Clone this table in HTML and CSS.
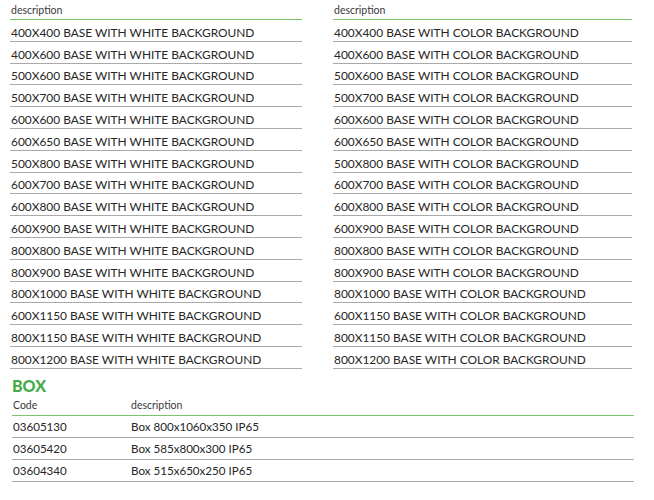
FILE: index.html
```html
<!DOCTYPE html>
<html>
<head>
<meta charset="utf-8">
<link rel="stylesheet" href="styles.css">
</head>
<body>
<div class="page">
  <div class="bases">
    <table class="list list-left">
      <thead><tr><th>description</th></tr></thead>
      <tbody>
        <tr><td>400X400 BASE WITH WHITE BACKGROUND</td></tr>
        <tr><td>400X600 BASE WITH WHITE BACKGROUND</td></tr>
        <tr><td>500X600 BASE WITH WHITE BACKGROUND</td></tr>
        <tr><td>500X700 BASE WITH WHITE BACKGROUND</td></tr>
        <tr><td>600X600 BASE WITH WHITE BACKGROUND</td></tr>
        <tr><td>600X650 BASE WITH WHITE BACKGROUND</td></tr>
        <tr><td>500X800 BASE WITH WHITE BACKGROUND</td></tr>
        <tr><td>600X700 BASE WITH WHITE BACKGROUND</td></tr>
        <tr><td>600X800 BASE WITH WHITE BACKGROUND</td></tr>
        <tr><td>600X900 BASE WITH WHITE BACKGROUND</td></tr>
        <tr><td>800X800 BASE WITH WHITE BACKGROUND</td></tr>
        <tr><td>800X900 BASE WITH WHITE BACKGROUND</td></tr>
        <tr><td>800X1000 BASE WITH WHITE BACKGROUND</td></tr>
        <tr><td>600X1150 BASE WITH WHITE BACKGROUND</td></tr>
        <tr><td>800X1150 BASE WITH WHITE BACKGROUND</td></tr>
        <tr><td>800X1200 BASE WITH WHITE BACKGROUND</td></tr>
      </tbody>
    </table>
    <table class="list list-right">
      <thead><tr><th>description</th></tr></thead>
      <tbody>
        <tr><td>400X400 BASE WITH COLOR BACKGROUND</td></tr>
        <tr><td>400X600 BASE WITH COLOR BACKGROUND</td></tr>
        <tr><td>500X600 BASE WITH COLOR BACKGROUND</td></tr>
        <tr><td>500X700 BASE WITH COLOR BACKGROUND</td></tr>
        <tr><td>600X600 BASE WITH COLOR BACKGROUND</td></tr>
        <tr><td>600X650 BASE WITH COLOR BACKGROUND</td></tr>
        <tr><td>500X800 BASE WITH COLOR BACKGROUND</td></tr>
        <tr><td>600X700 BASE WITH COLOR BACKGROUND</td></tr>
        <tr><td>600X800 BASE WITH COLOR BACKGROUND</td></tr>
        <tr><td>600X900 BASE WITH COLOR BACKGROUND</td></tr>
        <tr><td>800X800 BASE WITH COLOR BACKGROUND</td></tr>
        <tr><td>800X900 BASE WITH COLOR BACKGROUND</td></tr>
        <tr><td>800X1000 BASE WITH COLOR BACKGROUND</td></tr>
        <tr><td>600X1150 BASE WITH COLOR BACKGROUND</td></tr>
        <tr><td>800X1150 BASE WITH COLOR BACKGROUND</td></tr>
        <tr><td>800X1200 BASE WITH COLOR BACKGROUND</td></tr>
      </tbody>
    </table>
  </div>
  <h2 class="section-title">BOX</h2>
  <table class="box-table">
    <thead><tr><th class="code">Code</th><th>description</th></tr></thead>
    <tbody>
      <tr><td class="code">03605130</td><td>Box 800x1060x350 IP65</td></tr>
      <tr><td class="code">03605420</td><td>Box 585x800x300 IP65</td></tr>
      <tr><td class="code">03604340</td><td>Box 515x650x250 IP65</td></tr>
    </tbody>
  </table>
</div>
</body>
</html>
```

FILE: styles.css
```css
html, body {
  margin: 0;
  padding: 0;
  background: #ffffff;
}
body {
  font-family: Lato, "Open Sans", sans-serif;
  color: #262626;
}
.page {
  padding: 0 20px 0 10px;
}
.bases {
  display: flex;
  gap: 31px;
}
table {
  border-collapse: collapse;
}
.list-left {
  width: 292px;
}
.list-right {
  width: 299px;
}
th {
  font-weight: normal;
  font-size: 10.5px;
  color: #3a3a3a;
  text-align: left;
  height: 19px;
  padding: 0 0 0 1px;
  vertical-align: middle;
  border-bottom: 1px solid #7dc36e;
}
.list td {
  font-size: 11.9px;
  height: 21.8px;
  padding: 0 0 2px 1px;
  box-sizing: border-box;
  vertical-align: bottom;
  line-height: 12px;
  border-bottom: 1px solid #a9a9a9;
  white-space: nowrap;
}
.section-title {
  margin: 8px 0 0 2px;
  font-size: 16px;
  font-weight: 900;
  color: #44ad4a;
  line-height: 18px;
  height: 18px;
}
.box-table {
  margin-left: 2px;
  width: 622px;
}
.box-table th {
  height: 21px;
  box-sizing: border-box;
  padding-top: 4px;
  vertical-align: top;
  line-height: 13px;
}
.box-table td {
  font-size: 11.6px;
  height: 22px;
  box-sizing: border-box;
  padding: 0 0 4px 1px;
  line-height: 12px;
  vertical-align: bottom;
  border-bottom: 1px solid #a9a9a9;
}
.box-table .code {
  width: 118px;
}
```
